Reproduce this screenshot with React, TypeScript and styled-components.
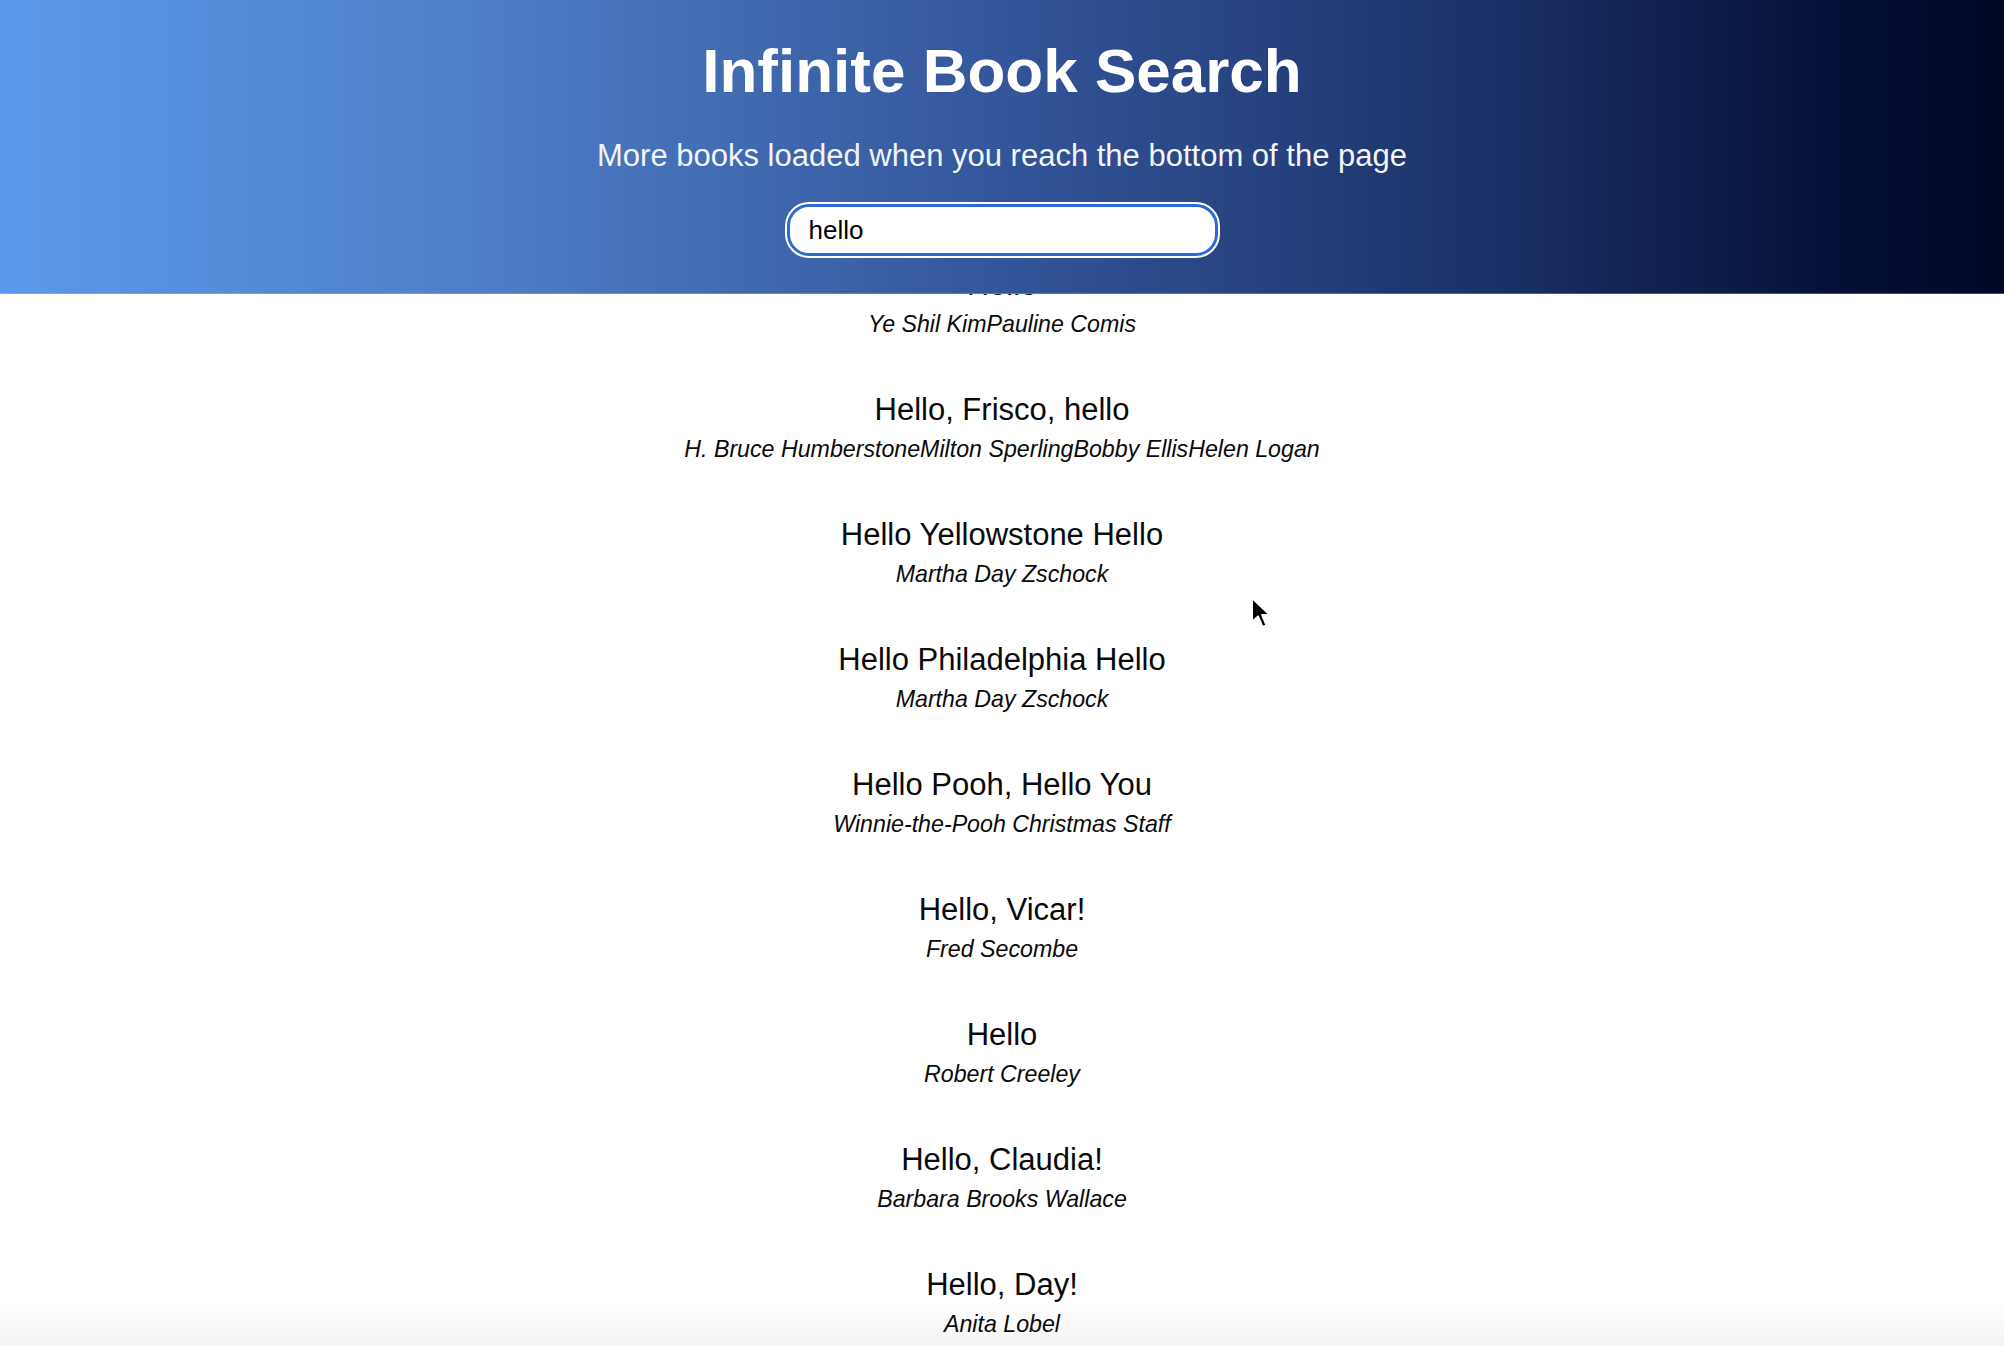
import React from "react";
import styled, { createGlobalStyle } from "styled-components";

const GlobalStyle = createGlobalStyle`
  html, body {
    margin: 0;
    padding: 0;
    height: 100%;
    overflow: hidden;
    background: #ffffff;
  }
  body {
    font-family: "Liberation Sans", Arial, Helvetica, sans-serif;
    color: #000;
  }
  #root {
    height: 100%;
  }
  * {
    box-sizing: border-box;
  }
`;

const Page = styled.div`
  position: relative;
  display: flex;
  flex-direction: column;
  height: 100vh;
  overflow: hidden;
`;

const Header = styled.header`
  position: relative;
  z-index: 2;
  flex: 0 0 294px;
  height: 294px;
  display: flex;
  flex-direction: column;
  align-items: center;
  padding-top: 35px;
  background: linear-gradient(
    to right,
    #5b99ea 0%,
    #4d7dc6 25%,
    #34559a 50%,
    #1a3066 75%,
    #050f36 92%,
    #000826 100%
  );
  border-bottom: 1px solid rgba(160, 200, 255, 0.35);
`;

const Title = styled.h1`
  margin: 0;
  font-size: 62px;
  line-height: 72px;
  font-weight: 700;
  color: #ffffff;
`;

const Subtitle = styled.p`
  margin: 31px 0 0;
  font-size: 31px;
  line-height: 36px;
  color: #f2f4f8;
`;

const SearchInput = styled.input`
  margin-top: 30px;
  width: 431px;
  height: 52px;
  padding: 0 19px;
  border: 3px solid #2f6ad2;
  border-radius: 22px;
  box-shadow: 0 0 0 2px #ffffff;
  background: #ffffff;
  font-family: "Liberation Sans", Arial, sans-serif;
  font-size: 26px;
  color: #000;
  outline: none;
`;

const Viewport = styled.main`
  flex: 1;
  overflow: hidden;
  background: linear-gradient(to bottom, #ffffff calc(100% - 44px), #f4f4f4 100%);
`;

const BookList = styled.ul<{ $offset: number }>`
  list-style: none;
  margin: ${(p) => -p.$offset}px 0 0;
  padding: 0;
  display: flex;
  flex-direction: column;
  align-items: center;
`;

const BookItem = styled.li`
  display: flex;
  flex-direction: column;
  align-items: center;
  padding: 27px 0;
  text-align: center;
`;

const BookTitle = styled.div`
  font-size: 31px;
  line-height: 36px;
  color: #0a0a0a;
`;

const BookAuthors = styled.div`
  margin-top: 8px;
  font-size: 23.2px;
  line-height: 27px;
  font-style: italic;
  color: #0a0a0a;
`;

const Cursor = styled.svg`
  position: absolute;
  left: 1250px;
  top: 596px;
  z-index: 4;
  pointer-events: none;
`;

const books: { title: string; authors: string[] }[] = [
  { title: "Hello", authors: ["Ye Shil Kim", "Pauline Comis"] },
  {
    title: "Hello, Frisco, hello",
    authors: ["H. Bruce Humberstone", "Milton Sperling", "Bobby Ellis", "Helen Logan"],
  },
  { title: "Hello Yellowstone Hello", authors: ["Martha Day Zschock"] },
  { title: "Hello Philadelphia Hello", authors: ["Martha Day Zschock"] },
  { title: "Hello Pooh, Hello You", authors: ["Winnie-the-Pooh Christmas Staff"] },
  { title: "Hello, Vicar!", authors: ["Fred Secombe"] },
  { title: "Hello", authors: ["Robert Creeley"] },
  { title: "Hello, Claudia!", authors: ["Barbara Brooks Wallace"] },
  { title: "Hello, Day!", authors: ["Anita Lobel"] },
  { title: "Hello, Goodbye", authors: ["Emily Jenkins"] },
];

export default function App() {
  const scrollOffset = 53.6;
  return (
    <>
      <GlobalStyle />
      <Page>
        <Header>
          <Title>Infinite Book Search</Title>
          <Subtitle>More books loaded when you reach the bottom of the page</Subtitle>
          <SearchInput type="text" defaultValue="hello" />
        </Header>
        <Viewport>
          <BookList $offset={scrollOffset}>
            {books.map((b, i) => (
              <BookItem key={i}>
                <BookTitle>{b.title}</BookTitle>
                <BookAuthors>{b.authors.join("")}</BookAuthors>
              </BookItem>
            ))}
          </BookList>
        </Viewport>
        <Cursor width="24" height="34" viewBox="0 0 24 34">
          <path
            d="M2 2 L2 26 L8 20.5 L12.5 31 L16.5 29.3 L12.2 19 L20 19 Z"
            fill="#000"
            stroke="#fff"
            strokeWidth="2"
            strokeLinejoin="round"
          />
        </Cursor>
      </Page>
    </>
  );
}
